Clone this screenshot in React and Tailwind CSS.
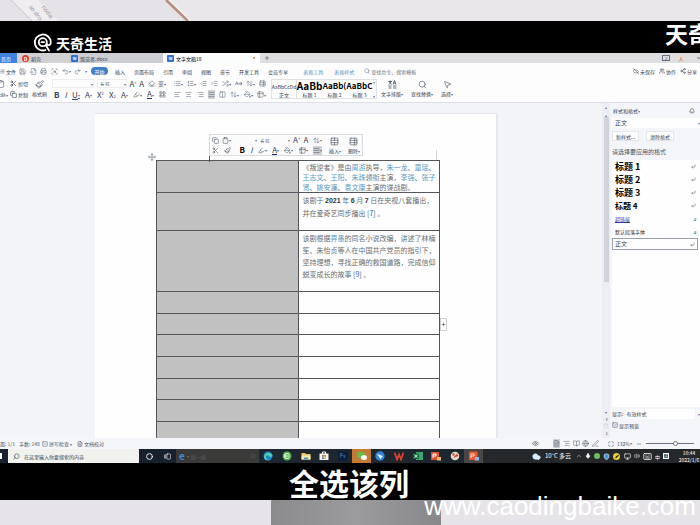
import React from "react";
import {
  Save, Printer, FileOutput, ScanSearch, Undo2, Redo2, Search, Scissors, Copy, Clipboard, Paintbrush,
  Eraser, List, ListOrdered, IndentDecrease, IndentIncrease, AlignLeft, AlignCenter, AlignRight, AlignJustify,
  Columns2, Table2, PaintBucket, Highlighter, MousePointer2, CloudOff, Users, Share2, Bell, Eye, FileText,
  BookOpen, Globe, PenLine, Maximize, SquareCheck, Circle, GalleryHorizontalEnd, Cloud, Mic, Shield, Monitor,
  Volume2, Keyboard, ChevronUp, Plus, Minus, Move, TableProperties, TableCellsMerge, Shuffle, ArrowUpDown,
  LayoutGrid, CaseSensitive, CornerDownLeft, Menu,
} from "lucide-react";

const Caret = () => <span className="text-[4px] leading-none text-gray-500">▾</span>;

function Tool({ icon: Icon, label, caret, active, size = 8 }) {
  return (
    <button aria-label={label} className={"flex h-[9px] shrink-0 items-center " + (active ? "bg-[#cfd0d4]" : "")}>
      <Icon size={size} strokeWidth={1.6} />
      {caret && <Caret />}
    </button>
  );
}

function Glyph({ children, label, caret, className = "" }) {
  return (
    <button aria-label={label} className={"flex h-[9px] shrink-0 items-center text-[8px] leading-none " + className}>
      {children}
      {caret && <Caret />}
    </button>
  );
}

const menus = ["插入", "页面布局", "引用", "审阅", "视图", "章节", "开发工具", "会员专享"];

function Backdrop() {
  return (
    <header className="relative h-[21px] w-full shrink-0 overflow-hidden bg-[#e9e7ea]">
      <svg className="h-full w-[240px]" viewBox="0 0 240 21" aria-hidden="true">
        <path d="M0 0H166L188 21H0Z" fill="#e5e3e7" />
        <path d="M166 0 188 21" stroke="#b98d7c" strokeWidth="2.5" />
        <path d="M170 0 191 21" stroke="#f7efec" strokeWidth="1.5" />
        <path d="M11 0 32 21H58L38 0Z" fill="#efedf0" />
        <path d="M11 0 32 21" stroke="#c9c6cb" strokeWidth="1" />
        <g fill="#98949a" fontFamily="Liberation Sans, sans-serif" fontSize="6">
          <text transform="translate(53 17) rotate(232)">lepou</text>
          <text transform="translate(42 19) rotate(232)">cup os</text>
        </g>
      </svg>
    </header>
  );
}

function Brand() {
  return (
    <div className="flex h-8 w-full shrink-0 justify-between overflow-hidden bg-black pl-[33px] text-white">
      <div className="flex items-center gap-[3px] pt-3">
        <svg width="20" height="20" viewBox="0 0 20 20" fill="none" stroke="#fff" strokeWidth="1.8" strokeLinecap="round" aria-hidden="true">
          <path d="M12.500 17A8 8 0 1 1 17.800 9.500c0 2.500-2.800 3.700-4 1.500" />
          <circle cx="9.800" cy="9.200" r="4" />
          <path d="M8.500 9.200h2.500M13 12.500l3 5" />
        </svg>
        <span className="text-[14px] font-bold leading-none">天奇生活</span>
      </div>
      <span className="w-[35px] whitespace-nowrap text-[23px] font-bold leading-[24px]">天奇生活</span>
    </div>
  );
}

function DocIcon() {
  return <span className="flex size-[7px] items-center justify-center rounded-[1px] bg-[#2f73cf] text-[4px] font-bold text-white">W</span>;
}

function TabStrip() {
  return (
    <nav className="flex h-[10px] shrink-0 items-stretch overflow-hidden whitespace-nowrap bg-[#dedee1] text-[5px] leading-none text-gray-700">
      <button className="w-[17px] bg-[#3f82e0] pr-[6px] text-right text-white">首页</button>
      <button className="flex w-[52px] items-center gap-[2px] bg-[#d2d2d5] pl-[5px]">
        <span className="flex size-[7px] items-center justify-center rounded-full bg-[#e0382f] text-[5px] font-bold text-white">D</span>
        稻壳
      </button>
      <button className="flex w-[94px] items-center gap-[2px] bg-[#cdced3] pl-[2px]">
        <DocIcon />叛逆者.docx
      </button>
      <button className="flex w-[97px] items-center gap-[2px] bg-[#fbfcfc] pl-1 text-black">
        <DocIcon />文字文稿18
        <span className="ml-auto mr-[5px] size-[2px] rounded-full bg-[#c47b4a]" />
      </button>
      <button aria-label="新建" className="flex w-[13px] items-center justify-center"><Plus size={6} /></button>
      <div className="ml-auto flex items-center gap-2 overflow-hidden">
        <span className="flex h-[6px] w-[8px] items-center justify-center border border-gray-500 text-[4px]">2</span>
        <span className="flex size-[6px] items-center justify-center bg-[#ecd9d4] text-[5px] text-[#c0442c]">人</span>
        <button aria-label="最小化" className="-mr-1 ml-1"><Minus size={8} /></button>
      </div>
    </nav>
  );
}

function MenuBar() {
  return (
    <div className="flex h-4 shrink-0 items-center whitespace-nowrap bg-[#fcfdfc] text-[5px] leading-none text-gray-700">
      <button className="flex w-[19px] items-center gap-[1px]"><Menu size={5} /> 文件</button>
      <div className="flex w-[68px] items-center justify-between text-gray-600">
        <Tool icon={Save} label="保存" size={7} />
        <Tool icon={FileOutput} label="输出" size={7} />
        <Tool icon={Printer} label="打印" size={7} />
        <Tool icon={ScanSearch} label="预览" size={7} />
        <Tool icon={Undo2} label="撤销" caret size={7} />
        <Tool icon={Redo2} label="恢复" size={7} />
        <Caret />
      </div>
      <button className="ml-1 h-2 w-[17px] rounded-full bg-[#3d7fc9] text-white">开始</button>
      <div className="ml-[7px] flex gap-[9px]">
        {menus.map((m) => <button key={m}>{m}</button>)}
      </div>
      <div className="ml-[15px] flex gap-[11px] text-[#4f93c4]">
        <button>表格工具</button>
        <button>表格样式</button>
      </div>
      <label className="ml-[10px] flex items-center gap-[1px] text-gray-500">
        <Search size={6} />
        <input aria-label="查找" className="w-[48px] bg-transparent placeholder:text-gray-500" placeholder="查找命令、搜索模板" />
      </label>
      <div className="ml-auto flex gap-1 pr-[3px]">
        <button className="flex items-center gap-[1px]"><CloudOff size={6} />未保存</button>
        <button className="flex items-center gap-[1px]"><Users size={6} />协作</button>
        <button className="flex items-center gap-[1px]"><Share2 size={6} />分享</button>
      </div>
    </div>
  );
}

const headings = [["AaBb", "标题 1", "text-[10px]"], ["AaBb(", "标题 2", "text-[8px]"], ["AaBbC", "标题 3", "text-[8px]"]];

function TypesetIcon() {
  return (
    <svg width="9" height="9" viewBox="0 0 18 18" fill="none" stroke="currentColor" strokeWidth="1.5" aria-hidden="true">
      <path d="M1 3h7M4.500 1v2M2 9l5-6M7 9 2 3M10 9l3-8 3 8M11 6h4M1 12h6M1 16h6M10 12h7M10 16h7" />
    </svg>
  );
}

function BigTool({ icon: Icon, label, caret }) {
  return (
    <button className="flex flex-col items-center gap-[2px]">
      <Icon size={9} strokeWidth={1.5} />
      <span className="flex items-center">{label}{caret && <Caret />}</span>
    </button>
  );
}

function Ribbon() {
  return (
    <div className="flex h-[24px] shrink-0 items-start overflow-hidden whitespace-nowrap border-b border-[#dcdfe3] bg-[#fcfdfc] text-[5px] leading-none text-gray-700">
      <div className="flex w-[10px] flex-col gap-1 overflow-hidden pt-[1px]">
        <Clipboard size={8} className="-ml-[3px]" strokeWidth={1.5} />
        <button className="-ml-1 flex items-center">粘贴<Caret /></button>
      </div>
      <div className="flex w-[22px] flex-col gap-[2px]">
        <button className="flex h-[9px] items-center gap-[1px]"><Scissors size={7} />剪切</button>
        <button className="flex h-[9px] items-center gap-[1px]"><Copy size={7} />复制</button>
      </div>
      <div className="flex w-[20px] flex-col items-start pt-[1px]">
        <BigTool icon={Paintbrush} label="格式刷" />
      </div>

      <div className="flex w-[114px] flex-col gap-[2px]">
        <div className="flex items-center justify-between">
          <div className="flex h-[9px] items-center border border-[#ececee]">
            <select aria-label="字体" className="w-[38px] appearance-none bg-transparent"><option></option></select><Caret />
          </div>
          <div className="flex h-[9px] w-[30px] items-center justify-between border border-[#ececee] pl-[2px]">
            <select aria-label="字号" className="appearance-none bg-transparent"><option>五号</option></select><Caret />
          </div>
          <Glyph label="增大字号">A<sup className="text-[4px]">+</sup></Glyph>
          <Glyph label="减小字号">A<sup className="text-[4px]">-</sup></Glyph>
          <Tool icon={Eraser} label="清除" size={7} />
          <Glyph label="拼音" caret className="text-gray-500"><span className="text-[6px]">变</span></Glyph>
        </div>
        <div className="flex items-center justify-between pl-[2px]">
          <Glyph label="加粗" className="font-bold">B</Glyph>
          <Glyph label="倾斜" className="italic">I</Glyph>
          <Glyph label="下划线" caret className="underline">U</Glyph>
          <Glyph label="删除线" caret>A</Glyph>
          <Glyph label="上标">X<sup className="text-[4px]">2</sup></Glyph>
          <Glyph label="下标">X<sub className="text-[4px]">2</sub></Glyph>
          <Glyph label="效果" caret>A</Glyph>
          <Tool icon={Highlighter} label="突出显示" caret size={7} />
          <Glyph label="字体颜色" caret><span className="border-b border-[#20356e]">A</span></Glyph>
          <Tool icon={LayoutGrid} label="字符底纹" size={7} />
        </div>
      </div>

      <div className="ml-2 flex w-[92px] flex-col gap-[2px] text-gray-600">
        <div className="flex items-center justify-between">
          <Tool icon={List} label="项目符号" caret size={7} />
          <Tool icon={ListOrdered} label="编号" caret size={7} />
          <Tool icon={IndentDecrease} label="减少缩进" size={7} />
          <Tool icon={IndentIncrease} label="增加缩进" size={7} />
          <Tool icon={Shuffle} label="中文版式" caret size={7} />
          <Tool icon={CaseSensitive} label="排序" size={7} />
          <Tool icon={ArrowUpDown} label="显示标记" caret size={7} />
          <Tool icon={TableProperties} label="制表位" size={7} />
        </div>
        <div className="flex items-center justify-between">
          <Tool icon={AlignLeft} label="左对齐" size={7} />
          <Tool icon={AlignCenter} label="居中" size={7} />
          <Tool icon={AlignRight} label="右对齐" size={7} />
          <Tool icon={AlignJustify} label="两端对齐" active size={7} />
          <Tool icon={Columns2} label="分散对齐" size={7} />
          <Tool icon={ArrowUpDown} label="行距" caret size={7} />
          <Tool icon={PaintBucket} label="底纹" caret size={7} />
          <Tool icon={Table2} label="边框" caret size={7} />
        </div>
      </div>

      <div className="ml-[5px] flex h-[20px] border border-[#dfe1e3]">
        <button className="flex w-[25px] flex-col items-center justify-between border-r border-[#dfe1e3] pb-[1px] pt-1">
          <span>AaBbCcDd</span><span>正文</span>
        </button>
        {headings.map(([sample, name, size]) => (
          <button key={name} className="flex w-[25px] flex-col items-center justify-between pb-[1px]">
            <span className={"font-bold leading-[11px] text-black " + size}>{sample}</span><span>{name}</span>
          </button>
        ))}
        <span className="flex w-1 flex-col justify-between pl-[1px]"><Caret /><Caret /></span>
      </div>
      <div className="ml-[4px] flex gap-2 pt-[1px]">
        <BigTool icon={TypesetIcon} label="文字排版" caret />
        <BigTool icon={Search} label="查找替换" caret />
        <BigTool icon={MousePointer2} label="选择" caret />
      </div>
    </div>
  );
}

function FloatingBar() {
  return (
    <div className="absolute left-[114px] top-5 flex h-[22px] w-[154px] items-center justify-between whitespace-nowrap border border-[#d9dbde] bg-[#fbfbfc] px-[2px] text-[5px] leading-none text-gray-700">
      <div className="flex w-[110px] flex-col gap-[1px]">
        <div className="flex items-center justify-between">
          <Tool icon={Copy} label="复制" size={7} />
          <Tool icon={Clipboard} label="粘贴" caret size={7} />
          <span className="flex"><select aria-label="浮动字体" className="w-[20px] appearance-none"><option></option></select><Caret /></span>
          <span className="flex w-[30px] items-center justify-between"><select aria-label="浮动字号" className="appearance-none"><option>五号</option></select><Caret /></span>
          <Glyph label="增大">A<sup className="text-[4px]">+</sup></Glyph>
          <Glyph label="减小">A<sup className="text-[4px]">-</sup></Glyph>
          <Tool icon={ArrowUpDown} label="间距" caret size={7} />
        </div>
        <div className="flex items-center justify-between">
          <Tool icon={Scissors} label="剪切" size={7} />
          <Tool icon={Paintbrush} label="格式刷" size={7} />
          <Glyph label="粗体" className="pl-[3px] font-bold text-black">B</Glyph>
          <Glyph label="斜体" className="italic">I</Glyph>
          <Tool icon={Highlighter} label="高亮" caret size={7} />
          <Glyph label="颜色" caret><span className="border-b border-[#20356e]">A</span></Glyph>
          <Tool icon={PaintBucket} label="填充" caret size={7} />
          <Tool icon={Table2} label="框线" caret size={7} />
          <Tool icon={AlignJustify} label="对齐" caret active size={7} />
        </div>
      </div>
      <BigTool icon={TableCellsMerge} label="插入" caret />
      <BigTool icon={TableProperties} label="删除" caret />
    </div>
  );
}

const Link = ({ children }) => <a href="#ref" className="text-[#5c9ac2]">{children}</a>;
const Line = ({ children }) => <span className="block whitespace-nowrap">{children}</span>;
const Num = ({ children }) => <b className="font-['Liberation_Sans',sans-serif] text-[#333]">{children}</b>;

function DocTable() {
  const left = "w-1/2 border border-[#55565a] bg-[#c1c1c1]";
  const right = "border border-[#55565a] px-1 pt-px align-top text-[7px] text-[#6b6d70]";
  return (
    <table className="w-[284px] table-fixed border-collapse">
      <tbody>
        <tr className="h-8">
          <td className={left} />
          <td className={right + " leading-[10px]"}>
            <Line>《叛逆者》是由<Link>周游</Link>执导，<Link>朱一龙</Link>、<Link>童瑶</Link>、</Line>
            <Line><Link>王志文</Link>、<Link>王阳</Link>、<Link>朱珠</Link>领衔主演，<Link>李强</Link>、<Link>张子</Link></Line>
            <Line><Link>贤</Link>、<Link>姚安濂</Link>、<Link>袁文康</Link>主演的谍战剧。</Line>
          </td>
        </tr>
        <tr className="h-[38px]">
          <td className={left} />
          <td className={right + " leading-[13px]"}>
            <Line>该剧于 <Num>2021</Num> 年 <Num>6</Num> 月 <Num>7</Num> 日在央视八套播出，</Line>
            <Line>并在爱奇艺同步播出 <span className="text-[#315a9c]">[7]</span> 。</Line>
          </td>
        </tr>
        <tr className="h-[61px]">
          <td className={left} />
          <td className={right + " leading-[12px]"}>
            <Line>该剧根据<Link>畀愚</Link>的同名小说改编，讲述了林楠</Line>
            <Line>笙、朱怡贞等人在中国共产党员的指引下，</Line>
            <Line>坚持理想，寻找正确的救国道路，完成信仰</Line>
            <Line>蜕变成长的故事 <span className="text-[#315a9c]">[9]</span> 。</Line>
          </td>
        </tr>
        {["h-[22px]", "h-[21px]", "h-[22px]", "h-[22px]", "h-[21px]", "h-[22px]", "h-[22px]"].map((h, i) => (
          <tr key={i} className={h}>
            <td className={left} />
            <td className={right} />
          </tr>
        ))}
      </tbody>
    </table>
  );
}

function Workspace() {
  return (
    <div className="flex min-w-0 flex-1 justify-start bg-[#f3f4f8] pl-[95px] pt-[10px]">
      <article className="relative h-[325px] w-[403px] overflow-hidden border-r-2 border-t border-[#e6e7ea] bg-[#fdfefd] pl-[61px] pt-[46px]">
        <FloatingBar />
        <Move size={8} strokeWidth={1.5} className="absolute left-[53px] top-[39px] text-gray-600" />
        <span className="absolute left-[114px] top-[42px] h-[6px] w-px bg-gray-600" />
        <span className="absolute left-[341px] top-9 h-[10px] w-px bg-[#d5d6d8]" />
        <DocTable />
        <button aria-label="添加列" className="absolute left-[345px] top-[204px] flex h-[13px] w-[7px] items-center justify-center border border-[#d0d1d4] bg-white">
          <Plus size={5} />
        </button>
      </article>
    </div>
  );
}

function ScrollStrip() {
  return (
    <div className="flex w-2 shrink-0 flex-col items-center bg-[#eceef3] text-gray-500">
      <span className="flex h-[14px] flex-col items-center justify-between pt-[2px] text-[4px] leading-none"><span>▴</span><span>▴</span></span>
      <span className="h-[165px] w-[5px] bg-[#cfd2d8]" />
      <span className="mt-auto flex flex-col items-center gap-[3px] pb-[3px] text-[4px] leading-none">
        <span>▾</span><span>⇞</span><span>○</span><span>⇟</span>
      </span>
    </div>
  );
}

const styleRows = [
  ["标题 1", "text-[9px] font-bold text-black", "ret"],
  ["标题 2", "text-[9px] font-bold text-black", "ret"],
  ["标题 3", "text-[9px] font-bold text-black", "ret"],
  ["标题 4", "text-[8px] font-bold text-black", "ret"],
  ["超链接", "text-[5px] text-[#3436a0] underline", "a"],
  ["默认段落字体", "text-[5px] text-gray-800", "a"],
];

function StylesPane() {
  return (
    <aside className="flex w-[90px] shrink-0 flex-col bg-[#f3f5f9] pl-[2px] text-[5px] leading-none text-gray-700">
      <div className="flex h-[15px] items-center justify-between pl-[1px] pr-[5px]">
        <button className="flex items-center">样式和格式<Caret /></button>
        <Bell size={6} />
      </div>
      <div className="flex h-[10px] items-center justify-between bg-[#fdfefd] pl-[3px]">
        <select aria-label="当前样式" className="w-[60px] appearance-none text-[6px]"><option>正文</option></select><Caret />
      </div>
      <div className="mt-[3px] flex gap-[7px]">
        <button className="h-[10px] w-[27px] border border-[#e4e6ea] bg-[#fbfcfd]">新样式...</button>
        <button className="h-[10px] w-[28px] border border-[#e4e6ea] bg-[#fbfcfd]">清除格式</button>
      </div>
      <p className="flex h-[19px] items-center pt-[3px] text-[6px] text-gray-600">请选择要应用的格式</p>
      <ul className="flex-1 bg-[#fdfefd]">
        {styleRows.map(([name, cls, mark]) => (
          <li key={name} className="flex h-[13px] items-center justify-between pl-[3px] pr-1">
            <span className={cls}>{name}</span>
            {mark === "ret" ? <CornerDownLeft size={5} /> : <i className="text-[5px]">a</i>}
          </li>
        ))}
        <li className="mr-[2px] flex h-[12px] items-center justify-between border border-[#9aa0a8] pl-[2px] pr-[2px]">
          <span className="text-[6px]">正文</span><CornerDownLeft size={5} />
        </li>
      </ul>
      <label className="flex h-[12px] items-center gap-[3px] pt-px">
        显示:
        <select className="h-[10px] flex-1 appearance-none bg-[#fdfefd] leading-[10px]"><option>有效样式</option></select><Caret />
      </label>
      <label className="flex h-[11px] items-center gap-[1px] pt-px">
        <input type="checkbox" defaultChecked className="peer sr-only" />
        <SquareCheck size={6} />显示预览
      </label>
      <div className="h-[8px]" />
    </aside>
  );
}

function StatusBar() {
  return (
    <div className="flex h-[11px] shrink-0 items-center whitespace-nowrap bg-[#f4f6f9] text-[5px] leading-none text-gray-600">
      <span className="w-[19px]">面: 1/1</span>
      <span className="w-[23px]">字数: 148</span>
      <button className="flex w-[35px] items-center gap-[1px]"><SquareCheck size={6} />拼写检查<Caret /></button>
      <button className="flex items-center gap-[1px]"><FileText size={6} />文档校对</button>
      <div className="ml-auto flex items-center pr-[6px]">
        <Eye size={7} className="mr-[14px]" />
        <div className="flex w-[46px] items-center justify-between">
          <Tool icon={FileText} label="页面视图" active size={7} />
          <Tool icon={AlignRight} label="大纲" size={7} />
          <Tool icon={BookOpen} label="阅读" size={7} />
          <Tool icon={Globe} label="网页" size={7} />
          <Tool icon={PenLine} label="写作" size={7} />
        </div>
        <Maximize size={6} className="ml-[9px] mr-[3px]" />
        <span className="flex w-[19px]">132%<Caret /></span>
        <Minus size={6} className="mr-1" />
        <input
          type="range" aria-label="缩放" defaultValue="62"
          className="h-px w-[48px] appearance-none bg-gray-500 [&::-webkit-slider-thumb]:size-[5px] [&::-webkit-slider-thumb]:appearance-none [&::-webkit-slider-thumb]:rounded-full [&::-webkit-slider-thumb]:border [&::-webkit-slider-thumb]:border-gray-500 [&::-webkit-slider-thumb]:bg-white"
        />
      </div>
    </div>
  );
}

const apps = [
  ["Edge", <g><circle cx="5" cy="5" r="4.500" fill="#1b86c9" /><path d="M1 6c0-5 7-6 8.500-1.500C9 6.500 6 6 6 5 5 3.500 2.500 4 3 7c.5 1.500 2 2.300 4 2C3.500 10 1 8.500 1 6Z" fill="#4fd0b4" /></g>],
  ["浏览器", <g><circle cx="5" cy="5" r="4.500" fill="#4fb848" /><path d="M7 3.500a2.500 2.500 0 1 0 0 3M2.500 5h5" stroke="#eaf8e0" strokeWidth="1.200" fill="none" /></g>],
  ["文件", <g><path d="M.5 2h3.500l1 1h4.500v5.500h-9Z" fill="#e7c766" /><path d="M.5 4.500h9v4h-9Z" fill="#f6e7a8" /><path d="M3 6.500h4v2H3Z" fill="#4a92c9" /></g>],
  ["商店", <g><path d="M3.500 3V1h3v2" stroke="#fff" fill="none" /><path d="M.5 2.500h9V9h-9Z" fill="#f5f5f5" /><path d="M3 4h1.800v1.800H3Z" fill="#e0562c" /><path d="M5.200 4H7v1.800H5.200Z" fill="#6fae3d" /><path d="M3 6.200h1.800V8H3Z" fill="#2f8bd0" /><path d="M5.200 6.200H7V8H5.200Z" fill="#e6b133" /></g>],
  ["Ps", <g><rect width="10" height="9" y=".5" rx="1" fill="#0b1d3a" /><text x="1.500" y="7" fontSize="5.500" fill="#4a83c6">Ps</text></g>],
  ["微信", <g><ellipse cx="4" cy="4" rx="3.800" ry="3.200" fill="#5fc04a" /><ellipse cx="7" cy="6.500" rx="3" ry="2.500" fill="#fff" /></g>],
  ["飞鸟", <g><circle cx="5" cy="5" r="4.700" fill="#2f88d8" /><path d="M2 3 8 5 5.500 8Z" fill="#e7f4ff" /></g>],
  ["WPS", <path d="M.5 1.500 3 8.500 5 3.500 7 8.500 9.500 1.500" stroke="#d8442e" strokeWidth="1.800" fill="none" />],
  ["表格", <g><rect x="3" y="1" width="7" height="8" fill="#3fa56a" /><rect y="2.500" width="6" height="5.500" fill="#136b3c" /><path d="m1.500 3.700 3 3m0-3-3 3" stroke="#fff" strokeWidth=".9" /></g>],
  ["演示", <g><rect y="1" width="8" height="8" fill="#e1502f" /><path d="M2 7V3h3v2H2" stroke="#fff" fill="none" /><rect x="6" y="6" width="4" height="3.500" fill="#e8b77a" /></g>],
  ["画图", <g><circle cx="5" cy="5" r="4.300" fill="#e7dccb" /><path d="m3 7 4-4.500L8.500 5Z" fill="#cf4c31" /><circle cx="3.500" cy="3.500" r="1.200" fill="#a8643d" /></g>],
  ["录屏", <g><rect width="8.500" height="8.500" y=".5" rx="1" fill="#ee5a30" /><path d="M2 7V3h3v2H2" stroke="#ffd9c8" fill="none" /><rect x="6" y="6" width="4" height="3.500" fill="#8fb6ee" /></g>],
];

function Taskbar() {
  return (
    <div className="flex h-[14px] shrink-0 items-stretch overflow-hidden whitespace-nowrap bg-[#25282a] text-[5px] leading-none text-white">
      <button aria-label="开始" className="flex w-2 items-center bg-[#17202e]"><span className="h-[6px] w-[2px] bg-white" /></button>
      <label className="flex w-[131px] items-center gap-1 bg-[#f1f2ed] pl-[5px] text-gray-700">
        <Search size={7} className="-scale-x-100" />
        <input aria-label="搜索" placeholder="在这里输入你要搜索的内容" className="w-[80px] bg-transparent placeholder:text-gray-700" />
      </label>
      <div className="flex w-[37px] items-center justify-between bg-[#17202e] pl-[7px] pr-[5px]">
        <Circle size={7} strokeWidth={3} /><GalleryHorizontalEnd size={7} />
      </div>
      <button className="flex w-[83px] items-center gap-[2px] bg-[#3a3a39] px-[3px] text-[#5d6062]">
        <span className="text-[10px] font-bold text-[#3c8edb]">e</span><Caret /><span>搜一搜</span><Search size={6} className="ml-auto" />
      </button>
      <div className="grid w-[224px] grid-cols-12">
        {apps.map(([name, art], i) => (
          <button key={name} aria-label={name} className={"flex items-center justify-center " + (i === 5 ? "bg-[#c27a35]" : i === 11 ? "bg-[#4a4645]" : "bg-[#1e2730]")}>
            <svg width="10" height="10" viewBox="0 0 10 10">{art}</svg>
          </button>
        ))}
      </div>
      <div className="ml-auto flex items-center">
        <Cloud size={9} fill="#d9edfb" className="mr-1 text-[#d9edfb]" />
        <span className="w-[31px] text-[6px]">10°C 多云</span>
        <div className="flex w-[93px] items-center justify-between">
          <ChevronUp size={6} />
          <Mic size={6} fill="white" />
          <span className="size-[6px] rounded-full bg-[#6cbf59]" />
          <Shield size={7} fill="#4a93d8" />
          <span className="flex size-[7px] items-center justify-center rounded-full bg-[#e9cc2f]"><span className="h-px w-[4px] -rotate-45 bg-black" /></span>
          <Monitor size={7} /><Volume2 size={6} /><Keyboard size={9} /><span>中</span>
          <span className="flex size-[6px] items-center justify-center border border-white text-[4px]">拼</span>
        </div>
        <div className="ml-[9px] w-[22px] text-center leading-[7px]"><p>10:44</p><p>2022/1/6</p></div>
      </div>
    </div>
  );
}

export default function App() {
  return (
    <div className="relative flex min-h-screen w-full flex-col overflow-hidden bg-[#e7e4e9] font-['Noto_Sans_CJK_SC','Noto_Sans',sans-serif]">
      <Backdrop />
      <Brand />
      <main className="flex flex-col">
        <TabStrip />
        <MenuBar />
        <Ribbon />
        <div className="flex">
          <Workspace />
          <ScrollStrip />
          <StylesPane />
        </div>
        <StatusBar />
        <Taskbar />
      </main>
      <p className="h-[37px] shrink-0 overflow-hidden bg-black pr-[2px] text-center text-[30px] font-bold leading-[38px] text-white">全选该列</p>
      <footer className="flex flex-1 justify-center pl-[11px]">
        <div className="min-h-[25px] w-[170px] bg-linear-to-r from-[#8b8b8e] via-[#9b9b9e] to-[#88888b]" />
      </footer>
      <span className="absolute bottom-1 right-1 font-['Liberation_Sans',sans-serif] text-[26px] leading-[30px] text-white">www.caodingbaike.com</span>
    </div>
  );
}
